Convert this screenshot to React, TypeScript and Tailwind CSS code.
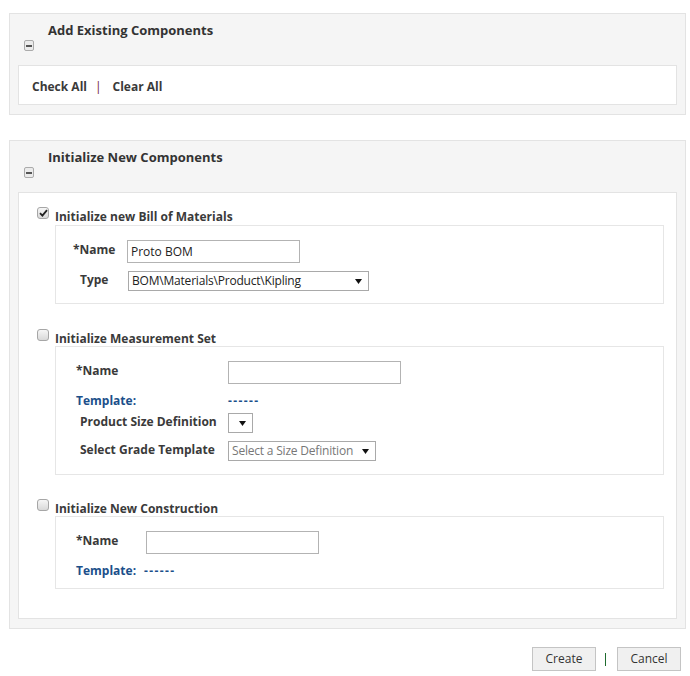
import React from "react"

function Toggle() {
  return (
    <div className="w-[10px] h-[11px] rounded-[2px] border border-[#ababab] bg-[#ebebeb] flex items-center justify-center">
      <div className="w-[6px] h-[2px] bg-[#555]" />
    </div>
  )
}

function Check({ checked }: { checked?: boolean }) {
  return (
    <div className="w-[12px] h-[12px] shrink-0 rounded-[3px] border border-[#a6a6a6] bg-gradient-to-b from-[#f6f6f6] to-[#d9d9d9] flex items-center justify-center">
      {checked && (
        <svg width="9" height="8" viewBox="0 0 9 8">
          <path d="M1 4.2 L3.4 6.6 L8 1.2" stroke="#222" strokeWidth="1.8" fill="none" />
        </svg>
      )}
    </div>
  )
}

function Arrow() {
  return (
    <svg width="7" height="5" viewBox="0 0 7 5" className="shrink-0">
      <path d="M0 0 H7 L3.5 5 Z" fill="#111" />
    </svg>
  )
}

function Select({ w, text, muted }: { w: string; text?: string; muted?: boolean }) {
  return (
    <div className={`${w} h-[20px] border border-[#a9a9a9] bg-white flex items-center justify-between pl-[3px] pr-[6px]`}>
      <span className={`text-[12px] leading-none whitespace-nowrap tracking-[-0.2px] ${muted ? "text-[#777]" : "text-[#222]"}`}>{text}</span>
      <Arrow />
    </div>
  )
}

function Input({ value }: { value?: string }) {
  return (
    <div className="w-[173px] h-[23px] border border-[#b3b3b3] bg-white flex items-center px-[3px] text-[12px] text-[#222]">
      {value}
    </div>
  )
}

function Section({ label, checked, tall, children }: { label: string; checked?: boolean; tall?: boolean; children: React.ReactNode }) {
  return (
    <div>
      <div className={`flex items-start pl-[18px] ${tall ? "h-[18px]" : "h-[17px]"}`}>
        <Check checked={checked} />
        <span className="ml-[6px] mt-[1px] leading-[17px] font-bold">{label}</span>
      </div>
      <div className="ml-[36px] mr-[12px] border border-[#e6e6e6]">{children}</div>
    </div>
  )
}

function Panel({ title, children }: { title: string; children: React.ReactNode }) {
  return (
    <div className="ml-[9px] w-[677px] border border-[#e3e3e3] bg-[#f5f5f5] px-[8px] pb-[9px]">
      <div className="pt-[7px] pl-[30px] leading-[18px] text-[13px] font-bold text-[#333]">{title}</div>
      <div className="mt-[1px] ml-[6px] mb-[14px]">
        <Toggle />
      </div>
      <div className="border border-[#e3e3e3] bg-white">{children}</div>
    </div>
  )
}

export default function App() {
  return (
    <div className="w-[690px] h-[676px] bg-white pt-[13px] font-['Open_Sans',sans-serif] text-[12px] text-[#3a3a3a]">
      <Panel title="Add Existing Components">
        <div className="h-[38px] flex items-center pl-[13px] pt-[3px] font-bold">
          <span>Check All</span>
          <span className="mx-[8px] font-normal text-[#6a2030]">|</span>
          <span className="ml-[3px]">Clear All</span>
        </div>
      </Panel>

      <div className="mt-[25px]">
        <Panel title="Initialize New Components">
          <div className="pt-[14px] pb-[29px]">
            <Section label="Initialize new Bill of Materials" checked tall>
              <div className="pt-[14px] pb-[12px]">
                <div className="flex items-center">
                  <div className="w-[71px] pl-[17px] font-bold -mt-[3px]">*Name</div>
                  <Input value="Proto BOM" />
                </div>
                <div className="flex items-center mt-[8px]">
                  <div className="w-[72px] pl-[24px] font-bold -mt-[3px]">Type</div>
                  <Select w="w-[241px]" text="BOM\Materials\Product\Kipling" />
                </div>
              </div>
            </Section>

            <div className="mt-[25px]">
              <Section label="Initialize Measurement Set">
                <div className="pt-[14px] pb-[13px]">
                  <div className="flex items-center">
                    <div className="w-[172px] pl-[20px] font-bold -mt-[4px]">*Name</div>
                    <Input />
                  </div>
                  <div className="flex items-center mt-[8px] leading-[18px] font-bold text-[#1b4f8a]">
                    <div className="w-[172px] pl-[20px]">Template:</div>
                    <div className="tracking-[1.4px]">------</div>
                  </div>
                  <div className="flex items-center mt-[3px]">
                    <div className="w-[172px] pl-[24px] font-bold -mt-[3px]">Product Size Definition</div>
                    <Select w="w-[25px]" />
                  </div>
                  <div className="flex items-center mt-[8px]">
                    <div className="w-[172px] pl-[24px] font-bold -mt-[3px]">Select Grade Template</div>
                    <Select w="w-[148px]" text="Select a Size Definition" muted />
                  </div>
                </div>
              </Section>
            </div>

            <div className="mt-[24px]">
              <Section label="Initialize New Construction">
                <div className="pt-[14px] pb-[8px]">
                  <div className="flex items-center">
                    <div className="w-[90px] pl-[20px] font-bold -mt-[4px]">*Name</div>
                    <Input />
                  </div>
                  <div className="flex items-center mt-[8px] leading-[18px] font-bold text-[#1b4f8a] pl-[20px]">
                    <span>Template:</span>
                    <span className="ml-[8px] tracking-[1.4px]">------</span>
                  </div>
                </div>
              </Section>
            </div>
          </div>
        </Panel>
      </div>

      <div className="flex justify-end items-center mt-[18px] pr-[9px]">
        <button className="w-[64px] h-[24px] border border-[#c4c4c4] bg-[#f0f0f0] text-[12px] text-[#333]">Create</button>
        <span className="ml-[9px] mr-[11px] w-[1px] h-[13px] bg-[#1e6b2e]" />
        <button className="w-[64px] h-[24px] border border-[#c4c4c4] bg-[#f0f0f0] text-[12px] text-[#333]">Cancel</button>
      </div>
    </div>
  )
}
